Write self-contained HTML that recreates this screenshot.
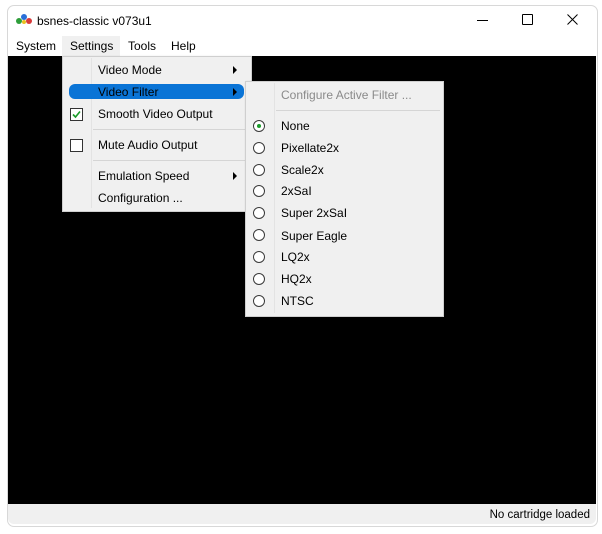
<!DOCTYPE html>
<html><head><style>
body{margin:0;width:602px;height:534px;background:#fff;position:relative;overflow:hidden;font-family:"Liberation Sans",Arial,sans-serif;font-size:12px;color:#000}
.abs{position:absolute}
.win{left:7px;top:5px;width:589px;height:520px;border:1px solid #d8d8d8;border-radius:7px;background:#fff;overflow:hidden}
.t{position:absolute;white-space:nowrap;line-height:14px}
.menu{background:#f0f0f0;border:1px solid #cfcfcf;box-shadow:1px 1px 2px rgba(0,0,0,.3)}
.sep{position:absolute;height:1px;background:#d5d5d5}
.radio{position:absolute;width:10px;height:10px;border:1px solid #3a3a3a;border-radius:50%;background:#fff}
.arr{position:absolute;width:0;height:0;border-left:4px solid #000;border-top:4px solid transparent;border-bottom:4px solid transparent}
</style></head><body>
<div class="abs win"></div>
<svg class="abs" style="left:15px;top:13px" width="18" height="12"><circle cx="4" cy="8" r="3" fill="#2e9e3a"/><circle cx="9" cy="4" r="3" fill="#2a6fd8"/><circle cx="14" cy="8" r="3" fill="#d83a3a"/><circle cx="9" cy="9" r="2" fill="#e8c020"/></svg>
<div class="t" style="left:37px;top:14px;font-size:12px">bsnes-classic v073u1</div>
<div class="abs" style="left:477px;top:20px;width:11px;height:1px;background:#000"></div>
<div class="abs" style="left:522px;top:14px;width:9px;height:9px;border:1px solid #000;border-radius:1px"></div>
<svg class="abs" style="left:567px;top:14px" width="11" height="11"><path d="M0.5 0.5L10.5 10.5M10.5 0.5L0.5 10.5" stroke="#000" stroke-width="1"/></svg>
<div class="t" style="left:16px;top:39px">System</div>
<div class="abs" style="left:62px;top:36px;width:58px;height:20px;background:#f0f0f0"></div>
<div class="t" style="left:70px;top:39px">Settings</div>
<div class="t" style="left:128px;top:39px">Tools</div>
<div class="t" style="left:171px;top:39px">Help</div>
<div class="abs" style="left:8px;top:56px;width:588px;height:448px;background:#000"></div>
<div class="abs" style="left:8px;top:504px;width:588px;height:20px;background:#f0f0f0;border-radius:0 0 6px 6px"></div>
<div class="t" style="right:12px;top:508px;font-size:11.5px">No cartridge loaded</div>
<div class="abs menu" style="left:62px;top:56px;width:188px;height:154px"></div>
<div class="abs" style="left:91px;top:58px;width:1px;height:150px;background:#e3e3e3"></div>
<div class="t" style="left:98px;top:63px">Video Mode</div><div class="arr" style="left:233px;top:66px"></div>
<div class="abs" style="left:69px;top:84px;width:175px;height:15px;background:#0a74d6;border-radius:6px"></div>
<div class="t" style="left:98px;top:85px">Video Filter</div><div class="arr" style="left:233px;top:88px"></div>
<div class="abs" style="left:70px;top:108px;width:11px;height:11px;border:1px solid #333;background:#fff"></div>
<svg class="abs" style="left:71px;top:109px" width="11" height="11"><path d="M2 5.5L4.5 8L9 2.5" stroke="#1a9c2a" stroke-width="1.6" fill="none"/></svg>
<div class="t" style="left:98px;top:107px">Smooth Video Output</div>
<div class="sep" style="left:93px;top:129px;width:152px"></div>
<div class="abs" style="left:70px;top:139px;width:11px;height:11px;border:1px solid #333;background:#fff"></div>
<div class="t" style="left:98px;top:138px">Mute Audio Output</div>
<div class="sep" style="left:93px;top:160px;width:152px"></div>
<div class="t" style="left:98px;top:169px">Emulation Speed</div><div class="arr" style="left:233px;top:172px"></div>
<div class="t" style="left:98px;top:191px">Configuration ...</div>
<div class="abs menu" style="left:245px;top:81px;width:197px;height:234px"></div>
<div class="abs" style="left:274px;top:83px;width:1px;height:230px;background:#e3e3e3"></div>
<div class="t" style="left:281px;top:88px;color:#8a8a8a">Configure Active Filter ...</div>
<div class="sep" style="left:276px;top:110px;width:164px"></div>
<div class="radio" style="left:253px;top:120px"></div><div class="abs" style="left:257px;top:124px;width:4px;height:4px;border-radius:50%;background:#1a9c2a"></div>
<div class="t" style="left:281px;top:119px">None</div>
<div class="radio" style="left:253px;top:142px"></div><div class="t" style="left:281px;top:141px">Pixellate2x</div>
<div class="radio" style="left:253px;top:164px"></div><div class="t" style="left:281px;top:163px">Scale2x</div>
<div class="radio" style="left:253px;top:185px"></div><div class="t" style="left:281px;top:184px">2xSaI</div>
<div class="radio" style="left:253px;top:207px"></div><div class="t" style="left:281px;top:206px">Super 2xSaI</div>
<div class="radio" style="left:253px;top:229px"></div><div class="t" style="left:281px;top:229px">Super Eagle</div>
<div class="radio" style="left:253px;top:251px"></div><div class="t" style="left:281px;top:250px">LQ2x</div>
<div class="radio" style="left:253px;top:273px"></div><div class="t" style="left:281px;top:272px">HQ2x</div>
<div class="radio" style="left:253px;top:295px"></div><div class="t" style="left:281px;top:294px">NTSC</div>
</body></html>
